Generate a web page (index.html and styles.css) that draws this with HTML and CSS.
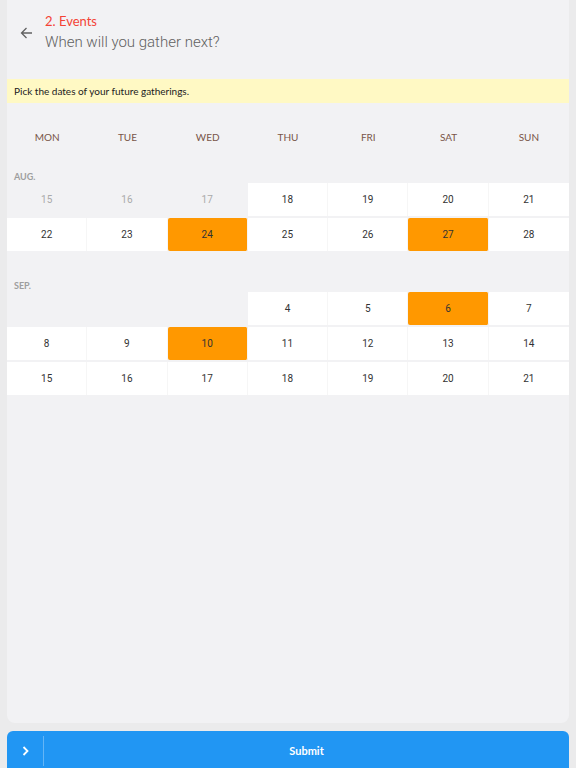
FILE: index.html
```html
<!DOCTYPE html>
<html>
<head>
    <link rel="stylesheet" href="styles.css">
</head>
<body>
<div class="page">
    <div class="card">
        <div class="header">
            <div class="back">
                <svg width="13" height="12" viewBox="0 0 13 12"><path d="M12 6H1.5M6.5 1L1.5 6l5 5" fill="none" stroke="#616161" stroke-width="1.3"/></svg>
            </div>
            <div class="titles">
                <div class="step">2. Events</div>
                <div class="question">When will you gather next?</div>
            </div>
        </div>

        <div class="hint">Pick the dates of your future gatherings.</div>

        <div class="weekdays">
            <div>MON</div>
            <div>TUE</div>
            <div>WED</div>
            <div>THU</div>
            <div>FRI</div>
            <div>SAT</div>
            <div>SUN</div>
        </div>

        <div class="month">
            <div class="month-label">AUG.</div>
            <div class="days">
                <div class="day past">15</div>
                <div class="day past">16</div>
                <div class="day past">17</div>
                <div class="day">18</div>
                <div class="day">19</div>
                <div class="day">20</div>
                <div class="day">21</div>
                <div class="day">22</div>
                <div class="day">23</div>
                <div class="day selected">24</div>
                <div class="day">25</div>
                <div class="day">26</div>
                <div class="day selected">27</div>
                <div class="day">28</div>
            </div>
        </div>

        <div class="month">
            <div class="month-label">SEP.</div>
            <div class="days">
                <div class="day empty"></div>
                <div class="day empty"></div>
                <div class="day empty"></div>
                <div class="day">4</div>
                <div class="day">5</div>
                <div class="day selected">6</div>
                <div class="day">7</div>
                <div class="day">8</div>
                <div class="day">9</div>
                <div class="day selected">10</div>
                <div class="day">11</div>
                <div class="day">12</div>
                <div class="day">13</div>
                <div class="day">14</div>
                <div class="day">15</div>
                <div class="day">16</div>
                <div class="day">17</div>
                <div class="day">18</div>
                <div class="day">19</div>
                <div class="day">20</div>
                <div class="day">21</div>
            </div>
        </div>
    </div>

    <div class="submit">
        <div class="submit__icon">
            <svg width="7" height="10" viewBox="0 0 7 10"><path d="M1.5 1l4 4-4 4" fill="none" stroke="#ffffff" stroke-width="1.8"/></svg>
        </div>
        <div class="submit__label">Submit</div>
    </div>
</div>
</body>
</html>
```

FILE: styles.css
```css
html, body {
    margin: 0;
    background-color: #ebebec;
    font-family: Lato, "Noto Sans", sans-serif;
}

.page {
    padding: 0 7px;
}

.card {
    height: 723px;
    background-color: #f2f2f4;
    border-radius: 0 0 8px 8px;
}

.header {
    display: flex;
    align-items: center;
    padding-top: 11px;
    height: 43px;
}

.back {
    width: 37px;
    display: flex;
    justify-content: center;
    padding-left: 1px;
}

.back svg {
    display: block;
}

.step {
    color: #f44336;
    font-size: 13px;
    line-height: 18px;
}

.question {
    color: #616161;
    font-family: Roboto, sans-serif;
    font-weight: 300;
    font-size: 15px;
    line-height: 24px;
}

.hint {
    margin-top: 25px;
    height: 24px;
    line-height: 24px;
    padding-left: 7px;
    background-color: #fff9c4;
    color: #212121;
    font-size: 10px;
}

.weekdays {
    display: grid;
    grid-template-columns: repeat(7, 1fr);
    height: 34px;
    line-height: 34px;
    margin-top: 17px;
    text-align: center;
    color: #795548;
    font-size: 10px;
}

.month {
    margin-top: 17px;
}

.month + .month {
    margin-top: 29px;
}

.month-label {
    height: 12px;
    line-height: 12px;
    padding-left: 7px;
    color: #9e9e9e;
    font-size: 9px;
    font-weight: bold;
}

.days {
    display: grid;
    grid-template-columns: repeat(7, 1fr);
    row-gap: 2px;
}

.day {
    height: 33px;
    line-height: 33px;
    text-align: center;
    background-color: #ffffff;
    border-right: 1px solid #f6f6f6;
    color: #333333;
    font-family: Roboto, sans-serif;
    font-size: 10px;
}

.day:nth-child(7n) {
    border-right: none;
}

.day.past {
    background-color: transparent;
    border-color: transparent;
    color: #aaaaaa;
}

.day.empty {
    background-color: transparent;
    border-color: transparent;
}

.day.selected {
    background-color: #ff9800;
    border-radius: 2px;
}

.submit {
    display: flex;
    align-items: center;
    margin-top: 8px;
    height: 40px;
    background-color: #2196f3;
    border-radius: 6px 6px 0 0;
    color: #ffffff;
}

.submit__icon {
    width: 36px;
    height: 30px;
    display: flex;
    align-items: center;
    justify-content: center;
    border-right: 1px solid #64b5f6;
}

.submit__label {
    flex: 1;
    text-align: center;
    font-size: 11px;
    font-weight: bold;
    padding-bottom: 2px;
}
```
